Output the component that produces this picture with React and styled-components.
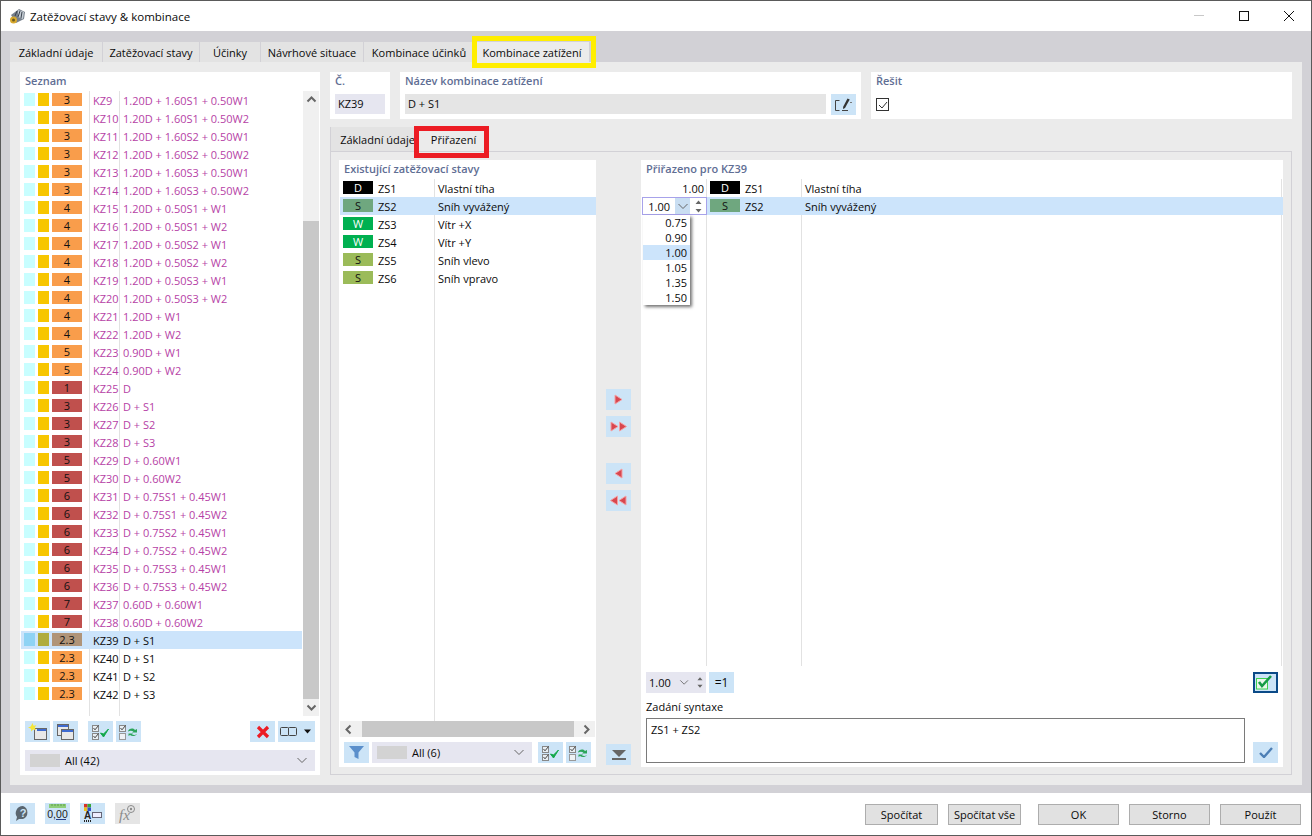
import styled, { createGlobalStyle } from "styled-components";

const GlobalStyle = createGlobalStyle`
  html, body { margin: 0; padding: 0; background: #fff; }
  * { box-sizing: border-box; }
  body { font-family: "Open Sans", "Noto Sans", sans-serif; font-size: 11px; color: #0a0a0a; }
`;

const Window = styled.div`
  position: relative;
  width: 1312px;
  height: 836px;
  display: flex;
  flex-direction: column;
  border: 1px solid #5a5a5a;
  overflow: hidden;
  background: #fff;
`;
const TitleBar = styled.div`
  height: 30px;
  display: flex;
  align-items: center;
  padding-left: 8px;
  font-size: 11.5px;
  gap: 4px;
`;
const WinButtons = styled.div`
  margin-left: auto;
  display: flex;
  align-items: center;
  gap: 35px;
  padding-right: 17px;
`;
const Body = styled.div`
  flex: 1;
  background: #d2d1d6;
  padding: 11px 9px 8px 9px;
  display: flex;
  flex-direction: column;
  min-height: 0;
`;
const TabBar = styled.div`
  display: flex;
  height: 20px;
  gap: 1px;
`;
const Tab = styled.div`
  width: ${(p) => p.$w}px;
  height: 20px;
  background: ${(p) => (p.$active ? "#ebebeb" : "#e3e3e3")};
  display: flex;
  align-items: center;
  justify-content: center;
  white-space: nowrap;
`;
const Main = styled.div`
  flex: 1;
  background: #ebebeb;
  padding: 10px;
  display: grid;
  grid-template-columns: 300px 962px;
  gap: 10px;
  min-height: 0;
`;
const Card = styled.div`
  background: #fff;
  display: flex;
  flex-direction: column;
  min-height: 0;
`;
const CardTitle = styled.div`
  height: 19px;
  line-height: 18px;
  padding-left: 5px;
  font-weight: 600;
  color: #5f6e94;
  white-space: nowrap;
`;
const ListWrap = styled.div`
  flex: 1;
  display: flex;
  min-height: 0;
  padding-left: 1px;
`;
const List = styled.div`
  flex: 1;
  min-width: 0;
  background-image: ${(p) =>
    p.$lines.map(() => "linear-gradient(#e2e2e2,#e2e2e2)").join(",")};
  background-size: 1px 100%;
  background-repeat: no-repeat;
  background-position: ${(p) => p.$lines.map((x) => `${x}px 0`).join(",")};
`;
const KzRow = styled.div`
  height: 18px;
  display: grid;
  grid-template-columns: 11px 11px 30px 30px 1fr;
  column-gap: 3px;
  padding-left: 3px;
  align-items: center;
  background: ${(p) => (p.$sel ? "#cce4fb" : "transparent")};
  color: ${(p) => (p.$plain ? "#0a0a0a" : "#b63fa6")};
  white-space: nowrap;
  & > :nth-child(4) { margin-left: 8px; margin-right: -8px; }
  & > :nth-child(5) { margin-left: 5px; }
`;
const Swatch = styled.div`
  height: 13px;
  margin-top: -1px;
  background: ${(p) => p.$c};
  color: ${(p) => p.$fg || "#111"};
  text-align: center;
  line-height: 13px;
`;
const VScroll = styled.div`
  width: 16px;
  margin-left: 1px;
  margin-right: 1px;
  background: #f0f0f0;
  display: flex;
  flex-direction: column;
  justify-content: space-between;
`;
const ScrollEnd = styled.div`
  height: 17px;
  display: flex;
  align-items: center;
  justify-content: center;
`;
const VThumb = styled.div`
  height: 478px;
  margin-top: auto;
  background: #c8c8c8;
`;
const Toolbar = styled.div`
  height: 21px;
  margin-top: ${(p) => p.$mt || 5}px;
  margin-bottom: ${(p) => p.$mb || 0}px;
  padding: 0 ${(p) => p.$px ?? 5}px;
  display: flex;
  align-items: center;
  gap: 3px;
`;
const IconBtn = styled.div`
  width: ${(p) => p.$w || 25}px;
  height: 21px;
  flex: none;
  background: ${(p) => (p.$off ? "#e5e5e5" : "#cce4f7")};
  display: flex;
  align-items: center;
  justify-content: center;
  margin-left: ${(p) => (p.$auto ? "auto" : `${p.$ml || 0}px`)};
  margin-top: ${(p) => (p.$autoTop ? "auto" : `${p.$mt || 0}px`)};
  border: ${(p) => (p.$outlined ? "2px solid #0b4a87" : "none")};
  font-size: ${(p) => p.$fs || 11}px;
`;
const Combo = styled.div`
  height: 21px;
  background: #e6e6f0;
  display: flex;
  align-items: center;
  padding: 0 7px 0 5px;
  flex: none;
`;
const ComboSwatch = styled.div`
  width: 30px;
  height: 13px;
  background: #d3d3d3;
  margin-right: 5px;
`;
const Chevron = styled.div`
  margin-left: auto;
  display: flex;
`;
const ComboBox = styled(Combo)`
  margin: 8px 5px 4px;
`;

const RightCol = styled.div`
  display: flex;
  flex-direction: column;
  min-height: 0;
`;
const TopRow = styled.div`
  display: grid;
  grid-template-columns: 60px 461px 421px;
  gap: 10px;
  height: 47px;
`;
const Field = styled.div`
  height: 20px;
  margin: 3px 5px 0;
  padding-left: 3px;
  line-height: 20px;
  background: ${(p) => p.$bg};
  flex: ${(p) => (p.$grow ? 1 : "none")};
`;
const NameLine = styled.div`
  display: flex;
`;
const NameField = styled(Field)`
  margin-right: 0;
`;
const EditBtn = styled(IconBtn)`
  margin: 3px 5px 0;
`;
const CheckBox = styled.div`
  width: 13px;
  height: 13px;
  margin: 7px 5px 0;
  border: 1px solid #333;
  display: flex;
  align-items: center;
  justify-content: center;
`;
const SubTabs = styled.div`
  display: flex;
  height: 24px;
  margin-top: 8px;
`;
const SubTab = styled.div`
  width: ${(p) => p.$w}px;
  height: 24px;
  display: flex;
  align-items: center;
  justify-content: center;
  padding-left: ${(p) => p.$pl || 0}px;
  background: ${(p) => (p.$active ? "#ebebeb" : "#e3e3e3")};
  white-space: nowrap;
  border-left: 1px solid #d2d1d6;
`;
const SubPanel = styled.div`
  flex: 1;
  min-height: 0;
  border: 1px solid #d2d1d6;
  padding: 8px 8px 7px;
  display: grid;
  grid-template-columns: 257px 45px 642px;
`;
const MidCol = styled.div`
  display: flex;
  flex-direction: column;
  align-items: center;
  padding: 229px 0 2px;
  gap: 6px;
`;
const ZsRow = styled.div`
  position: relative;
  height: 18px;
  display: grid;
  grid-template-columns: 30px 60px 1fr;
  column-gap: 5px;
  padding-left: 3px;
  align-items: center;
  background: ${(p) => (p.$sel ? "#cce4fb" : "transparent")};
  white-space: nowrap;
  & > :nth-child(3) { margin-left: -5px; }
`;
const AssignedRow = styled(ZsRow)`
  grid-template-columns: 62px 30px 60px 1fr;
  column-gap: 0;
  padding-left: 0;
  & > :nth-child(1) { text-align: right; margin-left: 0; }
  & > :nth-child(2) { margin-left: 6px; margin-right: -6px; }
  & > :nth-child(3) { margin-left: 11px; }
  & > :nth-child(4) { margin-left: 11px; }
`;
const EditCombo = styled.div`
  position: absolute;
  left: 0;
  top: 0;
  width: 65px;
  height: 18px;
  background: #fff;
  border: 1px solid #a7a2ea;
  display: flex;
  align-items: center;
`;
const EditValue = styled.span`
  width: 27px;
  text-align: right;
`;
const EditArrow = styled.div`
  width: 15px;
  height: 16px;
  margin-left: 5px;
  background: #c9def2;
  display: flex;
  align-items: center;
  justify-content: center;
`;
const Spin = styled.div`
  flex: 1;
  display: flex;
  justify-content: center;
`;
const Dropdown = styled.div`
  position: absolute;
  left: 0;
  top: 17px;
  width: 47px;
  background: #fff;
  box-shadow: 2px 2px 3px rgba(0, 0, 0, 0.55);
  z-index: 3;
`;
const DropItem = styled.div`
  height: 15px;
  line-height: 15px;
  text-align: right;
  padding-right: 3px;
  background: ${(p) => (p.$sel ? "#cce4fb" : "#fff")};
`;
const HScroll = styled.div`
  height: 16px;
  margin: 0 1px;
  background: #f0f0f0;
  display: flex;
  align-items: center;
  justify-content: space-between;
`;
const HThumb = styled.div`
  width: 212px;
  height: 16px;
  background: #c8c8c8;
`;
const ScrollArrow = styled.div`
  width: 17px;
  display: flex;
  justify-content: center;
`;
const GrowCombo = styled(Combo)`
  flex: 1;
`;
const FactorRow = styled.div`
  display: flex;
  align-items: center;
  gap: 3px;
  padding: 5px 5px 0;
  height: 27px;
`;
const FactorCombo = styled(Combo)`
  width: 60px;
  padding: 0 3px 0 3px;
  gap: 8px;
`;
const SyntaxLabel = styled.div`
  height: 20px;
  line-height: 18px;
  margin: 5px 0 0 5px;
`;
const SyntaxRow = styled.div`
  display: flex;
  align-items: flex-end;
  gap: 8px;
  padding: 0 5px 4px;
`;
const SyntaxBox = styled.div`
  flex: 1;
  height: 45px;
  border: 1px solid #7a7a7a;
  padding: 3px 4px;
`;
const Footer = styled.div`
  height: 42px;
  display: flex;
  align-items: flex-start;
  padding: 10px 10px 0 9px;
`;
const FootIcons = styled.div`
  display: flex;
  gap: 10px;
`;
const FootButtons = styled.div`
  margin-left: auto;
  display: flex;
  margin-top: 1px;
`;
const FootBtn = styled.div`
  width: ${(p) => p.$w}px;
  height: 21px;
  margin-left: ${(p) => p.$ml}px;
  background: #e1e1e1;
  border: 1px solid #adadad;
  display: flex;
  align-items: center;
  justify-content: center;
  white-space: nowrap;
`;
const Outline = styled.div`
  position: absolute;
  left: ${(p) => p.$x}px;
  top: ${(p) => p.$y}px;
  width: ${(p) => p.$w}px;
  height: ${(p) => p.$h}px;
  border: 5px solid ${(p) => p.$c};
  pointer-events: none;
`;

const Down = ({ c = "#666" }) => (
  <svg width="12" height="7" viewBox="0 0 12 7"><path d="M1.500 1l4.500 4.500L10.500 1" fill="none" stroke={c} strokeWidth="1" /></svg>
);
const Caret = ({ dir }) => {
  const r = { up: 0, down: 180, left: -90, right: 90 }[dir];
  return (
    <svg width="11" height="11" viewBox="0 0 11 11" style={{ transform: `rotate(${r}deg)` }}>
      <path d="M1.500 7.500l4-4 4 4" fill="none" stroke="#666" strokeWidth="2" />
    </svg>
  );
};
const SpinIcon = () => (
  <svg width="7" height="13" viewBox="0 0 7 13">
    <path d="M3.500 0.500l3 3.500h-6zM3.500 12.500l3-3.500h-6z" fill="#666" />
  </svg>
);
const NewWin = () => (
  <svg width="19" height="17" viewBox="0 0 19 17">
    <rect x="6.500" y="5.500" width="12" height="11" fill="#e8e8e8" stroke="#666" />
    <rect x="9" y="6" width="9" height="2" fill="#3f6bd0" />
    <path d="M4.500 0l1.100 2.700 2.900-.4-1.800 2.300 1.300 2.600-2.800-.7-2 2.100-.2-2.900L0 4.400l2.700-1z" fill="#f5e63a" />
  </svg>
);
const CopyWin = () => (
  <svg width="17" height="16" viewBox="0 0 17 16">
    <rect x="0.500" y="0.500" width="11" height="11" fill="#e8e8e8" stroke="#666" />
    <rect x="1" y="1" width="10" height="2" fill="#3f6bd0" />
    <rect x="4.500" y="5.500" width="12" height="10" fill="#e8e8e8" stroke="#666" />
    <rect x="5" y="6" width="11" height="2" fill="#3f6bd0" />
  </svg>
);
const Tick = ({ x, y }) => (
  <g transform={`translate(${x} ${y})`}>
    <rect x="0.500" y="0.500" width="6" height="6" fill="#e8eef3" stroke="#888" />
    <path d="M1.500 3l1.500 1.800 3.500-4.300" fill="none" stroke="#444" strokeWidth="1" />
  </g>
);
const CheckAll = () => (
  <svg width="18" height="16" viewBox="0 0 18 16">
    <Tick x={0} y={1} />
    <Tick x={0} y={9} />
    <path d="M8.500 9l3 4 5-8-5 5z" fill="#12a84a" stroke="#12a84a" strokeWidth="1" />
  </svg>
);
const CheckSwap = () => (
  <svg width="20" height="16" viewBox="0 0 20 16">
    <Tick x={0} y={1} />
    <rect x="0.500" y="9.500" width="6" height="6" fill="#eef2f5" stroke="#999" />
    <path d="M9 7c2-3 5-3 7-1l2-1v3.500h-5l1.500-1c-2-1-3.500-1-5.500 0z" fill="#2ca55a" />
    <path d="M18 10c-2 2.500-5 2.500-7 1l-1.500 1V9.500h4.500l-1 1c2 .8 3.500.5 5-.5z" fill="#2ca55a" />
  </svg>
);
const RedX = () => (
  <svg width="14" height="14" viewBox="0 0 14 14">
    <path d="M2 2l10 10M12 2L2 12" stroke="#ec1c24" strokeWidth="3.200" />
  </svg>
);
const Panes = () => (
  <svg width="37" height="21" viewBox="0 0 37 21">
    <rect x="2.500" y="6.500" width="8" height="8" rx="1" fill="none" stroke="#444" />
    <rect x="10.500" y="6.500" width="8" height="8" rx="1" fill="none" stroke="#444" />
    <path d="M26 8.500h7l-3.500 4z" fill="#111" />
  </svg>
);
const Filter = () => (
  <svg width="15" height="13" viewBox="0 0 15 13">
    <path d="M0 0h15L9.500 6.500V13l-4-2V6.500z" fill="#5b8fcb" />
  </svg>
);
const Collapse = () => (
  <svg width="14" height="10" viewBox="0 0 14 10">
    <path d="M0 0h14L7 7z" fill="#666" />
    <rect x="0" y="8" width="14" height="2" fill="#666" />
  </svg>
);
const Arrow = ({ dir, n }) => (
  <svg width={n === 2 ? 17 : 9} height="11" viewBox={n === 2 ? "0 0 17 11" : "0 0 9 11"} style={{ transform: dir === "left" ? "scaleX(-1)" : "none" }}>
    <path d="M1 1l7 4.500-7 4.500z" fill="#d8474f" stroke="#f3a0a4" strokeWidth="1" />
    {n === 2 && <path d="M9.500 1l7 4.500-7 4.500z" fill="#d8474f" stroke="#f3a0a4" strokeWidth="1" />}
  </svg>
);
const EditIcon = () => (
  <svg width="17" height="14" viewBox="0 0 17 14">
    <path d="M4.500 2.500h-4v10h4M7 12.500h6" fill="none" stroke="#444" strokeWidth="1" />
    <path d="M12.500 0.500l2.200 1L10 10l-2 1 .2-2.300z" fill="#333" />
    <path d="M15 4.500h2" stroke="#777" strokeWidth="1" />
  </svg>
);
const BigCheck = () => (
  <svg width="19" height="15" viewBox="0 0 19 15">
    <rect x="0.500" y="3.500" width="11" height="10.500" fill="#eaf6ea" stroke="#3fd24f" />
    <path d="M3 7l3 4L15 1" fill="none" stroke="#159a47" strokeWidth="2.600" />
  </svg>
);
const BlueCheck = () => (
  <svg width="14" height="11" viewBox="0 0 14 11">
    <path d="M1 6l4 4 8-9" fill="none" stroke="#4d7fb5" strokeWidth="2.400" />
  </svg>
);
const AppIcon = () => (
  <svg width="17" height="17" viewBox="0 0 17 17">
    <path d="M2 7l8-6 6 3-1 7-8 4z" fill="#77808c" />
    <path d="M9 2l6 2-1 7-5-2z" fill="#c4ccd4" />
    <path d="M6 8l2-5M9 9l2-6M12 10l1-6" stroke="#39414d" strokeWidth="1" />
    <circle cx="4.500" cy="12" r="3.500" fill="#d8a92e" />
    <circle cx="4.500" cy="12" r="1.500" fill="#6a5a20" />
  </svg>
);
const HelpIcon = () => (
  <svg width="17" height="17" viewBox="0 0 17 17">
    <path d="M9 1a7 7 0 0 1 0 13H5l-3 2 1-4A7 7 0 0 1 9 1z" fill="#5a6670" />
    <text x="9" y="12" fontSize="11" fontWeight="700" fill="#cce4f7" textAnchor="middle" fontFamily="Liberation Sans, sans-serif">?</text>
  </svg>
);
const UnitsIcon = () => (
  <svg width="21" height="19" viewBox="0 0 21 19">
    <rect x="2" y="0" width="17" height="4" fill="#8fce7a" />
    <path d="M5 0v2M8 0v2M11 0v2M14 0v2M17 0v2" stroke="#5d9c4d" strokeWidth="1" />
    <text x="10.500" y="14" fontSize="10.500" fill="#222" textAnchor="middle" fontFamily="Liberation Sans, sans-serif">0,00</text>
    <path d="M9 15.500h10" stroke="#27408b" strokeWidth="1" />
  </svg>
);
const StyleIcon = () => (
  <svg width="21" height="19" viewBox="0 0 21 19">
    <rect x="2" y="0" width="3.500" height="3.500" fill="#d8322a" />
    <rect x="5.500" y="0" width="3.500" height="3.500" fill="#38a838" />
    <rect x="2" y="3.500" width="3.500" height="3.500" fill="#e8c020" />
    <rect x="5.500" y="3.500" width="3.500" height="3.500" fill="#3050c8" />
    <rect x="10.500" y="8.500" width="9" height="5" fill="#eef" stroke="#667" />
    <text x="5.500" y="15" fontSize="10" fontWeight="700" fill="#222" textAnchor="middle" fontFamily="Liberation Sans, sans-serif">A</text>
    <path d="M2 17h7" stroke="#222" strokeWidth="2" strokeDasharray="1 1" />
  </svg>
);
const FxIcon = () => (
  <svg width="21" height="19" viewBox="0 0 21 19">
    <text x="2" y="16" fontSize="15" fontStyle="italic" fill="#8a8a8a" fontFamily="Liberation Serif, serif">fx</text>
    <circle cx="14" cy="5" r="3.500" fill="none" stroke="#8a8a8a" />
    <circle cx="14" cy="5" r="1.200" fill="#8a8a8a" />
  </svg>
);

const fm = (a, b, c) => `${a} + ${b} + ${c}`;
const kz = [
  [9, fm("1.20D", "1.60S1", "0.50W1"), "3"], [10, fm("1.20D", "1.60S1", "0.50W2"), "3"],
  [11, fm("1.20D", "1.60S2", "0.50W1"), "3"], [12, fm("1.20D", "1.60S2", "0.50W2"), "3"],
  [13, fm("1.20D", "1.60S3", "0.50W1"), "3"], [14, fm("1.20D", "1.60S3", "0.50W2"), "3"],
  [15, fm("1.20D", "0.50S1", "W1"), "4"], [16, fm("1.20D", "0.50S1", "W2"), "4"],
  [17, fm("1.20D", "0.50S2", "W1"), "4"], [18, fm("1.20D", "0.50S2", "W2"), "4"],
  [19, fm("1.20D", "0.50S3", "W1"), "4"], [20, fm("1.20D", "0.50S3", "W2"), "4"],
  [21, "1.20D + W1", "4"], [22, "1.20D + W2", "4"], [23, "0.90D + W1", "5"], [24, "0.90D + W2", "5"],
  [25, "D", "1", 1], [26, "D + S1", "3", 1], [27, "D + S2", "3", 1], [28, "D + S3", "3", 1],
  [29, "D + 0.60W1", "5", 1], [30, "D + 0.60W2", "5", 1],
  [31, fm("D", "0.75S1", "0.45W1"), "6", 1], [32, fm("D", "0.75S1", "0.45W2"), "6", 1],
  [33, fm("D", "0.75S2", "0.45W1"), "6", 1], [34, fm("D", "0.75S2", "0.45W2"), "6", 1],
  [35, fm("D", "0.75S3", "0.45W1"), "6", 1], [36, fm("D", "0.75S3", "0.45W2"), "6", 1],
  [37, "0.60D + 0.60W1", "7", 1], [38, "0.60D + 0.60W2", "7", 1],
  [39, "D + S1", "2.3", 0, "sel"], [40, "D + S1", "2.3", 0, "plain"],
  [41, "D + S2", "2.3", 0, "plain"], [42, "D + S3", "2.3", 0, "plain"],
];
const zs = [
  ["D", "ZS1", "Vlastní tíha", "#000", "#fff"],
  ["S", "ZS2", "Sníh vyvážený", "#6fa77f", "#111"],
  ["W", "ZS3", "Vítr +X", "#00b050", "#fff"],
  ["W", "ZS4", "Vítr +Y", "#00b050", "#fff"],
  ["S", "ZS5", "Sníh vlevo", "#9bbb59", "#111"],
  ["S", "ZS6", "Sníh vpravo", "#9bbb59", "#111"],
];

export default function App() {
  return (
    <Window>
      <GlobalStyle />
      <TitleBar>
        <AppIcon />
        <span>Zatěžovací stavy &amp; kombinace</span>
        <WinButtons>
          <svg width="10" height="2" viewBox="0 0 10 2"><rect width="10" height="1" fill="#c8c8c8" /></svg>
          <svg width="10" height="10" viewBox="0 0 10 10"><rect x="0.500" y="0.500" width="9" height="9" fill="none" stroke="#111" /></svg>
          <svg width="10" height="10" viewBox="0 0 10 10"><path d="M0 0l10 10M10 0L0 10" stroke="#111" /></svg>
        </WinButtons>
      </TitleBar>
      <Body>
        <TabBar>
          <Tab $w={92}>Základní údaje</Tab>
          <Tab $w={96}>Zatěžovací stavy</Tab>
          <Tab $w={60}>Účinky</Tab>
          <Tab $w={102}>Návrhové situace</Tab>
          <Tab $w={110}>Kombinace účinků</Tab>
          <Tab $w={114} $active>Kombinace zatížení</Tab>
        </TabBar>
        <Main>
          <Card>
            <CardTitle>Seznam</CardTitle>
            <ListWrap>
              <List $lines={[68, 98]}>
                {kz.map(([n, f, v, red, mode]) => (
                  <KzRow key={n} $sel={mode === "sel"} $plain={!!mode}>
                    <Swatch $c={mode === "sel" ? "#8fd3f4" : "#c8feff"} />
                    <Swatch $c={mode === "sel" ? "#b0ac3d" : "#f7c600"} />
                    <Swatch $c={mode === "sel" ? "#b09478" : red ? "#c0504d" : "#f99d4b"} $fg="#111">{v}</Swatch>
                    <span>KZ{n}</span>
                    <span>{f}</span>
                  </KzRow>
                ))}
              </List>
              <VScroll>
                <ScrollEnd><Caret dir="up" /></ScrollEnd>
                <VThumb />
                <ScrollEnd><Caret dir="down" /></ScrollEnd>
              </VScroll>
            </ListWrap>
            <Toolbar>
              <IconBtn><NewWin /></IconBtn>
              <IconBtn><CopyWin /></IconBtn>
              <IconBtn $ml={7}><CheckAll /></IconBtn>
              <IconBtn><CheckSwap /></IconBtn>
              <IconBtn $ml={106}><RedX /></IconBtn>
              <IconBtn $w={37}><Panes /></IconBtn>
            </Toolbar>
            <ComboBox>
              <ComboSwatch />
              All (42)
              <Chevron><Down /></Chevron>
            </ComboBox>
          </Card>

          <RightCol>
            <TopRow>
              <Card>
                <CardTitle>Č.</CardTitle>
                <Field $bg="#e6e6f0">KZ39</Field>
              </Card>
              <Card>
                <CardTitle>Název kombinace zatížení</CardTitle>
                <NameLine>
                  <NameField $bg="#e5e5e5" $grow>D + S1</NameField>
                  <EditBtn><EditIcon /></EditBtn>
                </NameLine>
              </Card>
              <Card>
                <CardTitle>Řešit</CardTitle>
                <CheckBox>
                  <svg width="10" height="8" viewBox="0 0 10 8"><path d="M1 4l3 3 5-6" fill="none" stroke="#333" strokeWidth="1" /></svg>
                </CheckBox>
              </Card>
            </TopRow>
            <SubTabs>
              <SubTab $w={88} $pl={6}>Základní údaje</SubTab>
              <SubTab $w={70} $active>Přiřazení</SubTab>
            </SubTabs>
            <SubPanel>
              <Card>
                <CardTitle>Existující zatěžovací stavy</CardTitle>
                <ListWrap>
                  <List $lines={[94]}>
                    {zs.map(([k, id, name, c, fg], i) => (
                      <ZsRow key={id} $sel={i === 1}>
                        <Swatch $c={c} $fg={fg}>{k}</Swatch>
                        <span>{id}</span>
                        <span>{name}</span>
                      </ZsRow>
                    ))}
                  </List>
                </ListWrap>
                <HScroll>
                  <ScrollArrow><Caret dir="left" /></ScrollArrow>
                  <HThumb />
                  <ScrollArrow><Caret dir="right" /></ScrollArrow>
                </HScroll>
                <Toolbar $mt={5} $mb={4}>
                  <IconBtn><Filter /></IconBtn>
                  <GrowCombo>
                    <ComboSwatch />
                    All (6)
                    <Chevron><Down /></Chevron>
                  </GrowCombo>
                  <IconBtn $ml={3}><CheckAll /></IconBtn>
                  <IconBtn><CheckSwap /></IconBtn>
                </Toolbar>
              </Card>

              <MidCol>
                <IconBtn><Arrow dir="right" /></IconBtn>
                <IconBtn><Arrow dir="right" n={2} /></IconBtn>
                <IconBtn $mt={20}><Arrow dir="left" /></IconBtn>
                <IconBtn><Arrow dir="left" n={2} /></IconBtn>
                <IconBtn $autoTop><Collapse /></IconBtn>
              </MidCol>

              <Card>
                <CardTitle>Přiřazeno pro KZ39</CardTitle>
                <ListWrap>
                  <List $lines={[64, 159, 639]}>
                    <AssignedRow>
                      <span>1.00</span>
                      <Swatch $c="#000" $fg="#fff">D</Swatch>
                      <span>ZS1</span>
                      <span>Vlastní tíha</span>
                    </AssignedRow>
                    <AssignedRow $sel>
                      <span />
                      <Swatch $c="#6fa77f">S</Swatch>
                      <span>ZS2</span>
                      <span>Sníh vyvážený</span>
                      <EditCombo>
                        <EditValue>1.00</EditValue>
                        <EditArrow><Down /></EditArrow>
                        <Spin><SpinIcon /></Spin>
                        <Dropdown>
                          {["0.75", "0.90", "1.00", "1.05", "1.35", "1.50"].map((v) => (
                            <DropItem key={v} $sel={v === "1.00"}>{v}</DropItem>
                          ))}
                        </Dropdown>
                      </EditCombo>
                    </AssignedRow>
                  </List>
                </ListWrap>
                <FactorRow>
                  <FactorCombo>
                    1.00
                    <Down />
                    <SpinIcon />
                  </FactorCombo>
                  <IconBtn $fs={12}>=1</IconBtn>
                  <IconBtn $outlined $auto><BigCheck /></IconBtn>
                </FactorRow>
                <SyntaxLabel>Zadání syntaxe</SyntaxLabel>
                <SyntaxRow>
                  <SyntaxBox>ZS1 + ZS2</SyntaxBox>
                  <IconBtn><BlueCheck /></IconBtn>
                </SyntaxRow>
              </Card>
            </SubPanel>
          </RightCol>
        </Main>
      </Body>
      <Footer>
        <FootIcons>
          <IconBtn><HelpIcon /></IconBtn>
          <IconBtn><UnitsIcon /></IconBtn>
          <IconBtn><StyleIcon /></IconBtn>
          <IconBtn $off><FxIcon /></IconBtn>
        </FootIcons>
        <FootButtons>
          <FootBtn $w={73} $ml={0}>Spočítat</FootBtn>
          <FootBtn $w={73} $ml={10}>Spočítat vše</FootBtn>
          <FootBtn $w={81} $ml={17}>OK</FootBtn>
          <FootBtn $w={81} $ml={10}>Storno</FootBtn>
          <FootBtn $w={81} $ml={10}>Použít</FootBtn>
        </FootButtons>
      </Footer>
      <Outline $c="#ffee00" $x={471} $y={35} $w={124} $h={32} />
      <Outline $c="#ec1c24" $x={413} $y={125} $w={75} $h={32} />
    </Window>
  );
}
